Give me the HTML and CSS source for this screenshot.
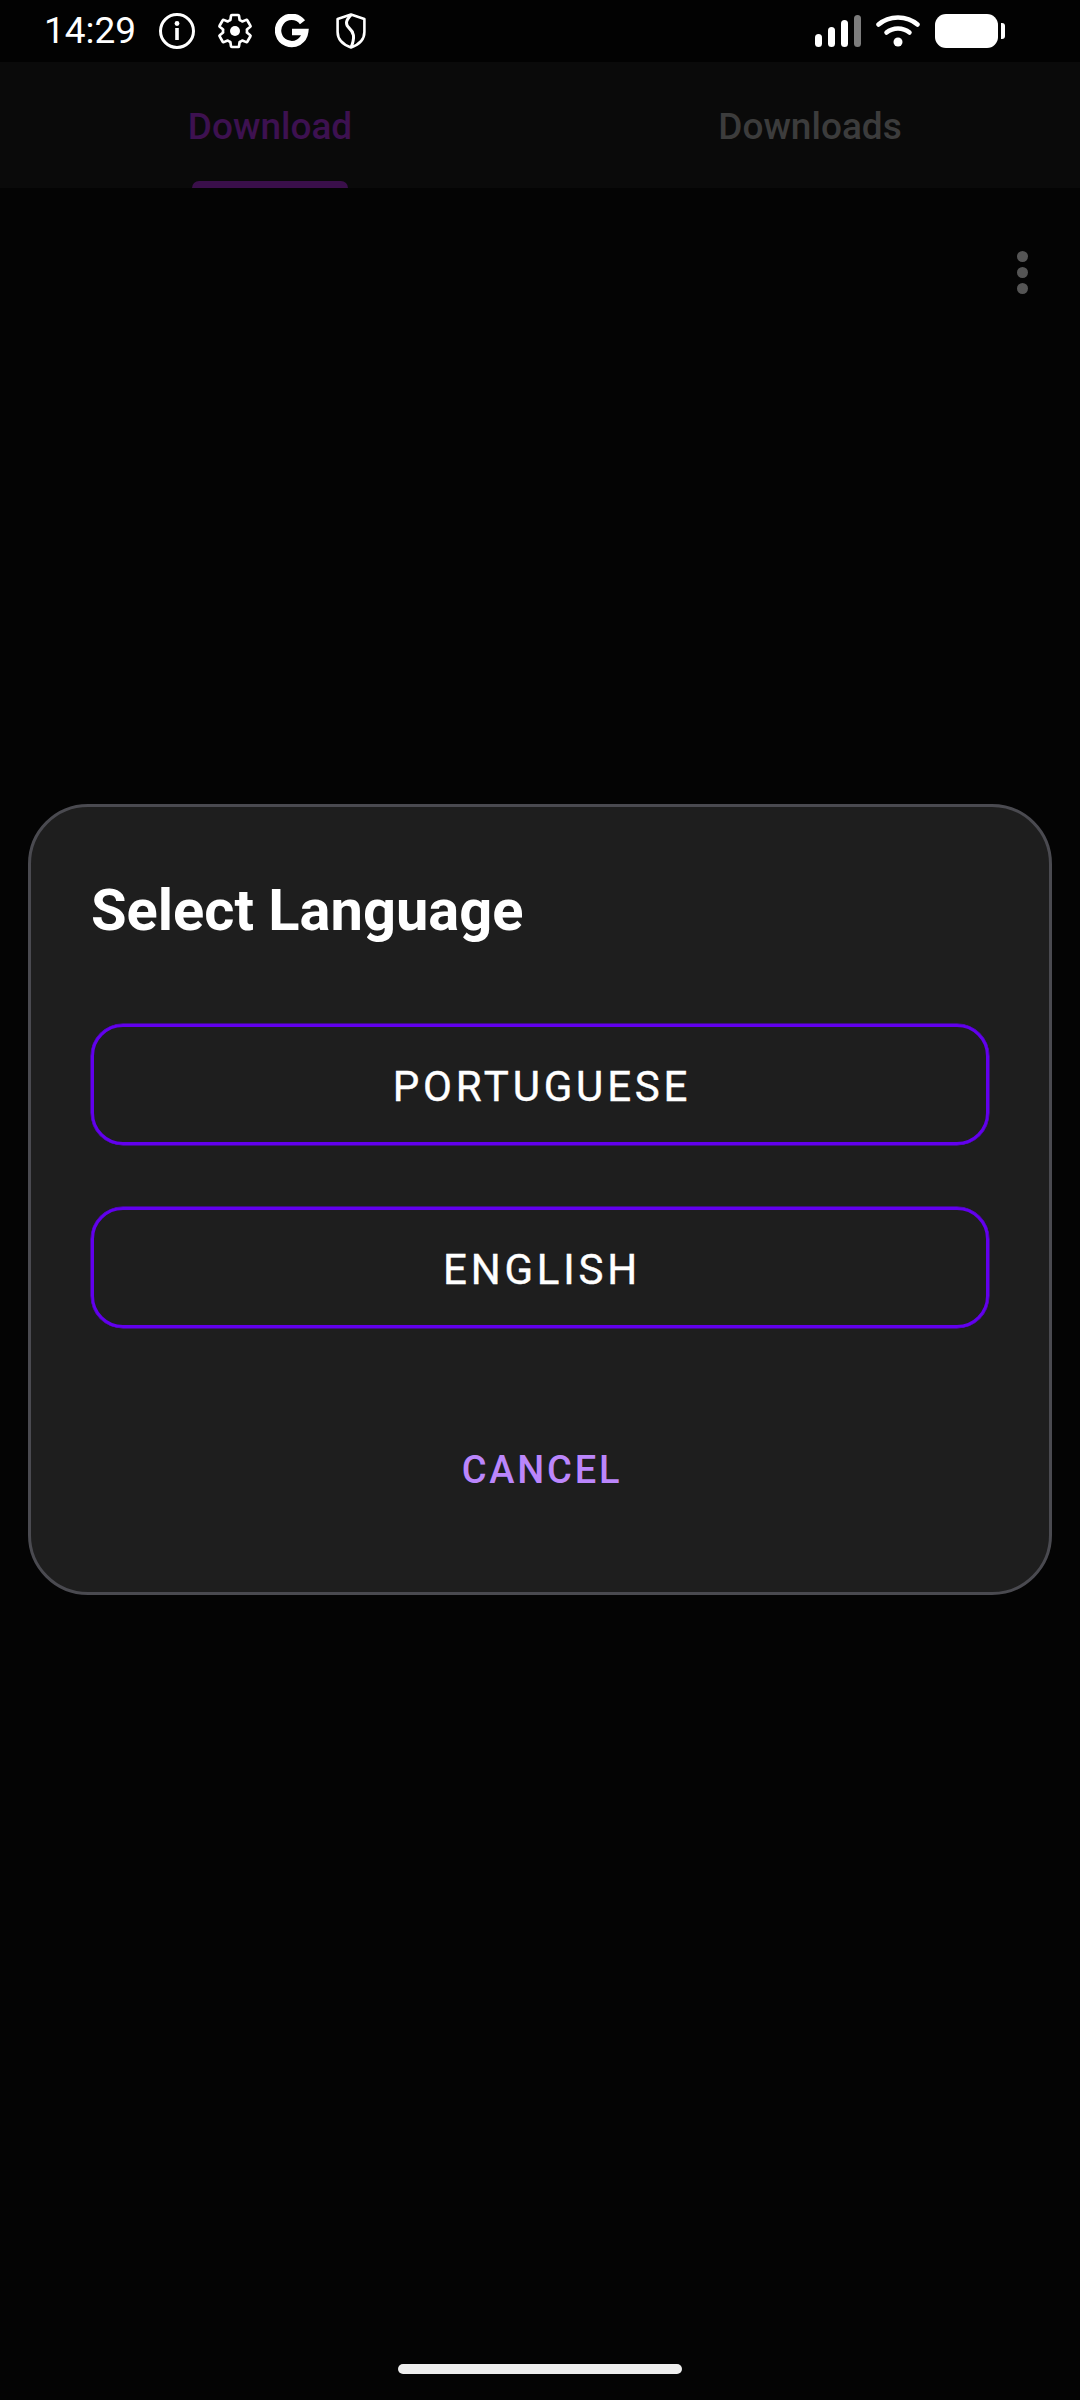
FILE: index.html
```html
<!DOCTYPE html>
<html lang="en">
<head>
<meta charset="utf-8">
<title>Select Language</title>
<link rel="stylesheet" href="styles.css">
</head>
<body>
<div class="screen">
  <header class="status">
    <div class="status-left">
      <span class="time">14:29</span>
      <svg class="ic ic-info" viewBox="0 0 38 38"><circle cx="19" cy="19" r="16.5" fill="none" stroke="#fff" stroke-width="3"/><circle cx="19" cy="11.5" r="2.4" fill="#fff"/><rect x="17.2" y="16" width="3.6" height="12" fill="#fff"/></svg>
      <svg class="ic ic-gear" viewBox="0 0 24 24"><path fill="none" stroke="#fff" stroke-width="1.6" stroke-linejoin="round" d="M19.14 12.94c.04-.3.06-.61.06-.94 0-.32-.02-.64-.07-.94l2.03-1.58c.18-.14.23-.41.12-.61l-1.92-3.32c-.12-.22-.37-.29-.59-.22l-2.39.96c-.5-.38-1.03-.7-1.62-.94l-.36-2.54c-.04-.24-.24-.41-.48-.41h-3.84c-.24 0-.43.17-.47.41l-.36 2.54c-.59.24-1.13.57-1.62.94l-2.39-.96c-.22-.08-.47 0-.59.22L2.74 8.87c-.12.21-.08.47.12.61l2.03 1.58c-.05.3-.09.63-.09.94s.02.64.07.94l-2.03 1.58c-.18.14-.23.41-.12.61l1.92 3.32c.12.22.37.29.59.22l2.39-.96c.5.38 1.03.7 1.62.94l.36 2.54c.05.24.24.41.48.41h3.84c.24 0 .44-.17.47-.41l.36-2.54c.59-.24 1.13-.56 1.62-.94l2.39.96c.22.08.47 0 .59-.22l1.92-3.32c.12-.22.07-.47-.12-.61l-2.01-1.58z"/><circle cx="12" cy="12" r="3" fill="#fff"/></svg>
      <svg class="ic ic-g" viewBox="0 0 34 34"><path fill="none" stroke="#fff" stroke-width="6.4" d="M27.5 8.2A13.6 13.6 0 1 0 30.2 18H17"/></svg>
      <svg class="ic ic-shield" viewBox="0 0 30 36"><path fill="none" stroke="#fff" stroke-width="2.6" stroke-linejoin="round" d="M15 1.6 28.4 6v13c0 7-5.400 12.600-13.400 15.400C7 31.600 1.600 26 1.600 19V6z"/><path fill="none" stroke="#fff" stroke-width="3" d="M15 2c-6 6-5.500 10-1.500 13.500s6 8 1.500 19"/></svg>
    </div>
    <div class="status-right">
      <div class="signal">
        <span class="bar b1"></span><span class="bar b2"></span><span class="bar b3"></span><span class="bar b4"></span>
      </div>
      <svg class="ic ic-wifi" viewBox="0 0 44 33"><path fill="none" stroke="#fff" stroke-width="4.500" stroke-linecap="round" d="M2.500 10.500C13 1 31 1 41.500 10.500"/><path fill="none" stroke="#fff" stroke-width="4.500" stroke-linecap="round" d="M10.500 18.500c6.500-5.500 16.500-5.500 23 0"/><circle cx="22" cy="28" r="4.500" fill="#fff"/></svg>
      <div class="battery"><span class="cell"></span><span class="nub"></span></div>
    </div>
  </header>

  <nav class="tabs">
    <div class="tab tab-active"><span>Download</span><i class="indicator"></i></div>
    <div class="tab"><span>Downloads</span></div>
  </nav>

  <div class="toolbar">
    <div class="more"><i></i><i></i><i></i></div>
  </div>

  <div class="overlay">
    <section class="dialog">
      <h1 class="title">Select Language</h1>
      <button class="option">PORTUGUESE</button>
      <button class="option">ENGLISH</button>
      <button class="cancel">CANCEL</button>
    </section>
  </div>

  <div class="home"></div>
</div>
</body>
</html>
```

FILE: styles.css
```css
* { box-sizing: border-box; }
html, body { margin: 0; padding: 0; background: #040404; }
body { font-family: Roboto, "Liberation Sans", sans-serif; }

.screen {
  position: relative;
  width: 1080px;
  height: 2400px;
  overflow: hidden;
  background: #040404;
  display: flex;
  flex-direction: column;
}

.status {
  height: 62px;
  background: #020202;
  display: flex;
  justify-content: space-between;
  align-items: flex-start;
  padding: 14px 75px 0 44px;
}
.status-left { display: flex; align-items: center; height: 34px; }
.status-right { display: flex; align-items: flex-start; height: 34px; }
.time { color: #fff; font-size: 37px; font-weight: 400; line-height: 34px; width: 115px; }
.ic { display: block; flex: none; }
.ic-info { width: 38px; height: 38px; margin-left: -1px; }
.ic-gear { width: 40px; height: 40px; margin-left: 19px; }
.ic-g { width: 34px; height: 34px; margin-left: 20px; }
.ic-shield { width: 30px; height: 36px; margin-left: 27px; }

.signal { display: flex; align-items: flex-end; gap: 5.500px; height: 33px; margin-right: 15px; }
.bar { width: 7.500px; background: #fff; border-radius: 4px; }
.b1 { height: 13px; }
.b2 { height: 20px; }
.b3 { height: 27px; }
.b4 { height: 32px; background: #7c7c7c; }
.ic-wifi { width: 44px; height: 33px; margin-right: 15px; }
.battery { display: flex; align-items: center; height: 34px; gap: 3px; }
.cell { width: 63px; height: 34px; background: #fff; border-radius: 11px; }
.nub { width: 4px; height: 16px; background: #fff; border-radius: 0 3px 3px 0; }

.tabs {
  height: 126px;
  background: #0a0a0a;
  display: flex;
}
.tab {
  position: relative;
  flex: 1;
  display: flex;
  justify-content: center;
  padding-top: 45px;
  font-size: 37px;
  font-weight: 500;
  line-height: 40px;
  color: #3c3c3c;
}
.tab-active { color: #3d1150; }
.indicator {
  position: absolute;
  left: 192px;
  bottom: 0;
  width: 156px;
  height: 7px;
  background: #3a0f4a;
  border-radius: 7px 7px 0 0;
}

.toolbar { display: flex; justify-content: flex-end; padding: 63px 52px 0 0; }
.more { display: flex; flex-direction: column; gap: 5px; }
.more i { display: block; width: 11px; height: 11px; border-radius: 50%; background: #555; }

.overlay {
  position: absolute;
  inset: 0;
  display: flex;
  align-items: center;
  justify-content: center;
}
.dialog {
  width: 1024px;
  height: 791px;
  background: #1e1e1e;
  border: 3px solid #4a4a50;
  border-radius: 60px;
  padding: 0 60px;
  display: flex;
  flex-direction: column;
  margin-top: -1px;
}
.title {
  margin: 70px 0 0;
  color: #fff;
  font-size: 57.800px;
  font-weight: 700;
  line-height: 66px;
}
.option {
  height: 121px;
  margin-top: 62px;
  background: transparent;
  border: 3px solid #6200ee;
  box-shadow: 0 0 0 0.5px #6200ee;
  border-radius: 32px;
  color: #fff;
  font-family: inherit;
  font-size: 42px;
  font-weight: 400;
  -webkit-text-stroke: 0.4px #fff;
  letter-spacing: 3.800px;
  padding: 3px 0 0 4px;
}
.option:first-of-type { margin-top: 81px; }
.cancel {
  margin-top: 121px;
  background: transparent;
  border: 0;
  padding: 0 0 0 4px;
  font-family: inherit;
  color: #bb86fc;
  font-size: 38px;
  font-weight: 500;
  letter-spacing: 2.800px;
  line-height: 42px;
}

.home {
  position: absolute;
  left: 398px;
  bottom: 26px;
  width: 284px;
  height: 10px;
  border-radius: 5px;
  background: #eeeeee;
}
```
